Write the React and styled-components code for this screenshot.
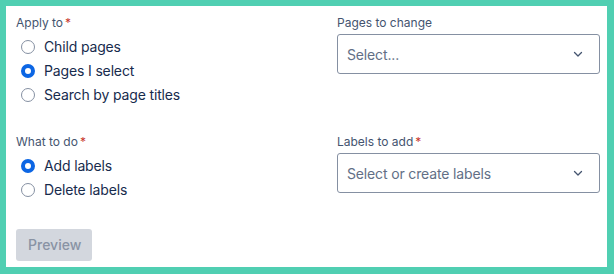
import styled, { createGlobalStyle } from 'styled-components'

const GlobalStyle = createGlobalStyle`
	html, body {
		margin: 0;
		padding: 0;
		background: #50cfb2;
		font-family: Inter, 'Noto Sans', 'Liberation Sans', sans-serif;
		-webkit-font-smoothing: antialiased;
	}
`

export default function App() {
	return (
		<>
			<GlobalStyle />
			<Frame>
				<Panel>
					<Field>
						<Label>
							Apply to<Required>*</Required>
						</Label>
						<RadioGroup>
							{applyOptions.map((option) => (
								<RadioRow key={option.label}>
									<RadioIcon checked={option.checked} />
									<RadioText>{option.label}</RadioText>
								</RadioRow>
							))}
						</RadioGroup>
					</Field>

					<Field>
						<Label>Pages to change</Label>
						<SelectBox>
							<Placeholder>Select...</Placeholder>
							<Chevron />
						</SelectBox>
					</Field>

					<Field>
						<Label>
							What to do<Required>*</Required>
						</Label>
						<RadioGroup>
							{actionOptions.map((option) => (
								<RadioRow key={option.label}>
									<RadioIcon checked={option.checked} />
									<RadioText>{option.label}</RadioText>
								</RadioRow>
							))}
						</RadioGroup>
					</Field>

					<Field>
						<Label>
							Labels to add<Required>*</Required>
						</Label>
						<SelectBox>
							<Placeholder>Select or create labels</Placeholder>
							<Chevron />
						</SelectBox>
					</Field>

					<ButtonRow>
						<Button disabled>Preview</Button>
					</ButtonRow>
				</Panel>
			</Frame>
		</>
	)
}

function Chevron() {
	return (
		<ChevronWrap>
			<svg width='12' height='12' viewBox='0 0 12 12' fill='none'>
				<path
					d='M2.5 4.5 6 8l3.5-3.5'
					stroke='#44546f'
					strokeWidth='1.3'
					strokeLinecap='round'
					strokeLinejoin='round'
				/>
			</svg>
		</ChevronWrap>
	)
}

const Frame = styled.div`
	width: 614px;
	height: 274px;
	padding: 6px 7px 7px 6px;
	box-sizing: border-box;
`

const Panel = styled.div`
	background: #ffffff;
	height: 100%;
	box-sizing: border-box;
	padding: 9px 7px 6px 10px;
	display: grid;
	grid-template-columns: 1fr 263px;
	grid-template-rows: auto auto auto;
	row-gap: 27px;
	align-items: start;
`

const Field = styled.div`
	display: flex;
	flex-direction: column;
`

const Label = styled.div`
	font-size: 12px;
	line-height: 16px;
	color: #44546f;
	margin-bottom: 3px;
`

const Required = styled.span`
	color: #c9372c;
	margin-left: 2px;
`

const RadioGroup = styled.div`
	display: flex;
	flex-direction: column;
	margin-top: 1px;
`

const RadioRow = styled.label`
	display: flex;
	align-items: center;
	height: 24px;
`

const RadioIcon = styled.span`
	width: 24px;
	height: 24px;
	display: flex;
	align-items: center;
	justify-content: center;
	flex: none;

	&::before {
		content: '';
		box-sizing: border-box;
		width: 14px;
		height: 14px;
		border-radius: 50%;
		background: #ffffff;
		border: ${(p) => (p.checked ? '4.5px solid #0c66e4' : '1px solid #8590a2')};
	}
`

const RadioText = styled.span`
	font-size: 14px;
	line-height: 20px;
	color: #172b4d;
	padding-left: 4px;
	letter-spacing: -0.15px;
`

const SelectBox = styled.div`
	height: 40px;
	box-sizing: border-box;
	border: 1px solid #8590a2;
	border-radius: 3px;
	display: flex;
	align-items: center;
	justify-content: space-between;
	padding: 0 9px;
	background: #ffffff;
`

const Placeholder = styled.span`
	font-size: 14px;
	color: #626f86;
	letter-spacing: -0.15px;
`

const ChevronWrap = styled.span`
	display: flex;
	align-items: center;
	justify-content: center;
	width: 24px;
	height: 24px;
`

const ButtonRow = styled.div`
	grid-column: 1 / 2;
	margin-top: -1px;
`

const Button = styled.button`
	height: 32px;
	width: 76px;
	border: none;
	border-radius: 3px;
	background: #d3d7de;
	color: #8993a4;
	font-family: inherit;
	font-size: 14px;
	font-weight: 500;
	padding: 0 12px;
	cursor: not-allowed;
`

const applyOptions = [
	{ label: 'Child pages', checked: false },
	{ label: 'Pages I select', checked: true },
	{ label: 'Search by page titles', checked: false },
]

const actionOptions = [
	{ label: 'Add labels', checked: true },
	{ label: 'Delete labels', checked: false },
]
